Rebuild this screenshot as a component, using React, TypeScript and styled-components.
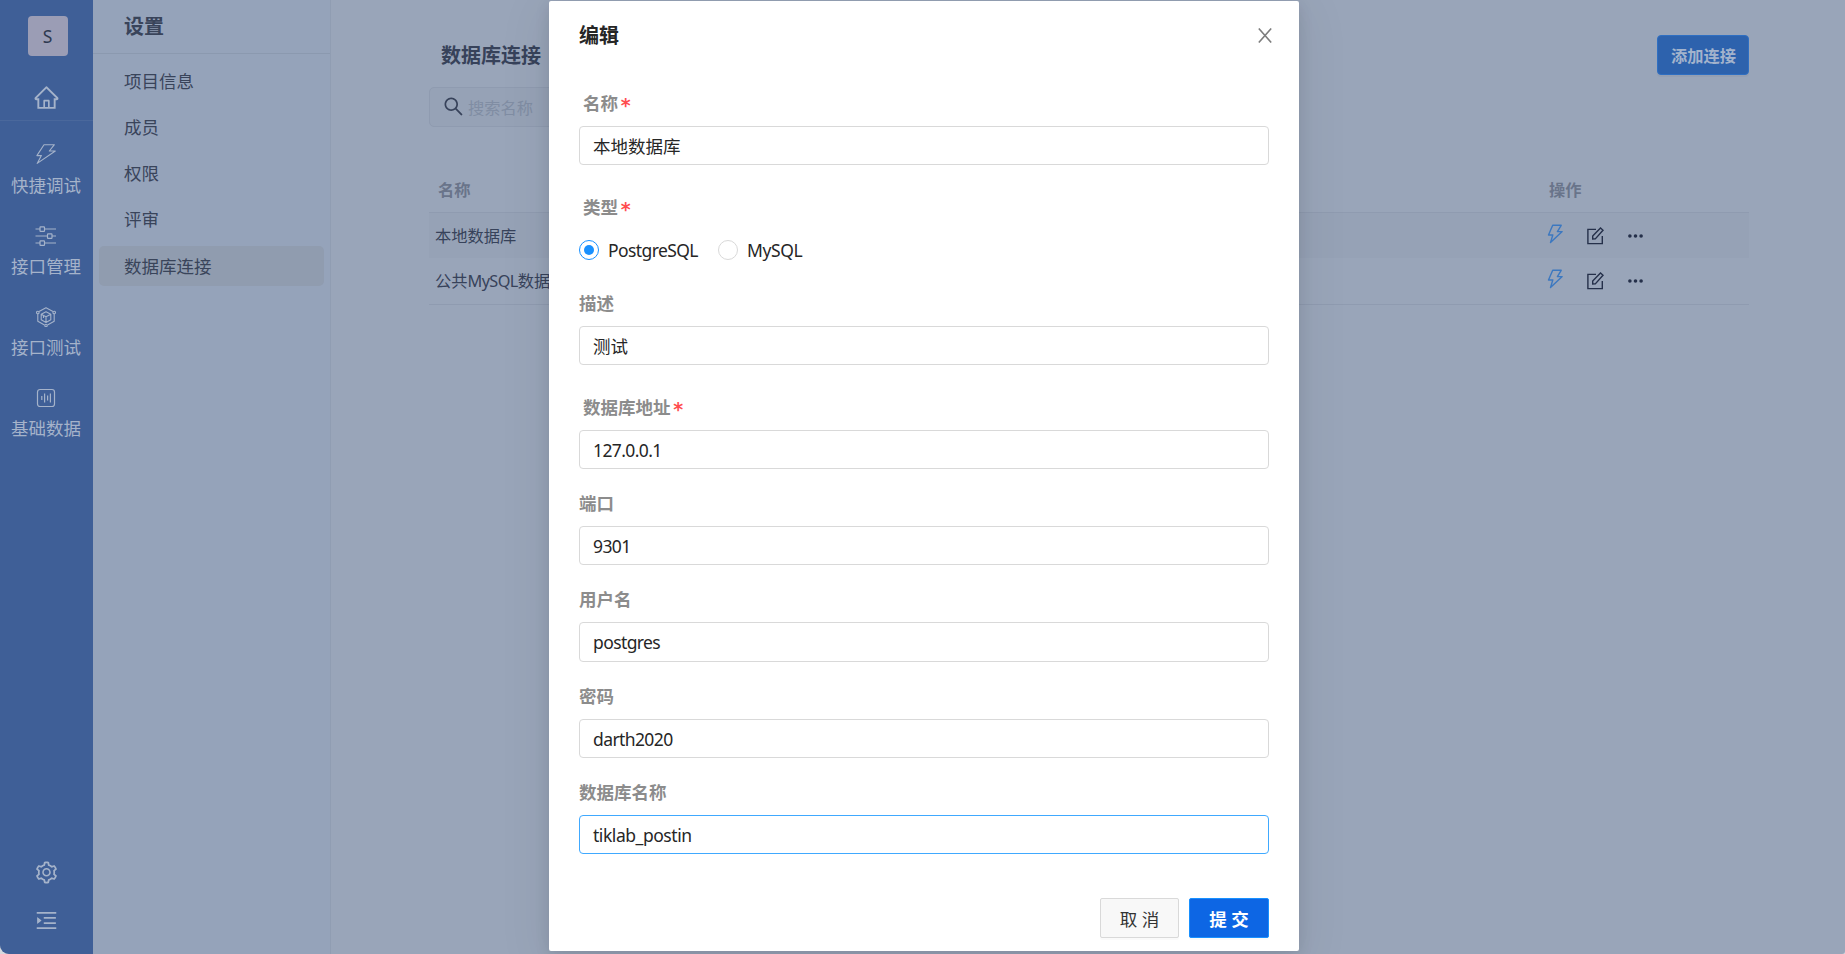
import React from "react";
import styled, { createGlobalStyle, css } from "styled-components";
import { AiOutlineHome, AiOutlineSetting, AiOutlineMenuUnfold, AiOutlineSearch } from "react-icons/ai";

const Global = createGlobalStyle`
  *, *::before, *::after { box-sizing: border-box; }
  html, body { margin: 0; padding: 0; background: #d5d8de; }
  body {
    font-family: "Noto Sans", "Noto Sans CJK SC", sans-serif;
    font-size: 17.5px;
    overflow: hidden;
  }
  svg { display: block; }
`;

const Page = styled.div`
  position: relative;
  display: flex;
  width: 1845px;
  height: 954px;
  background: #99a5b9;
  border-radius: 0 0 3px 9px;
  overflow: hidden;
`;

/* ---------- left rail ---------- */
const Rail = styled.nav`
  width: 93px;
  flex: none;
  display: flex;
  flex-direction: column;
  align-items: center;
  background: #3f5f97;
  color: #a5b3ca;
`;
const Avatar = styled.div`
  width: 40px;
  height: 40px;
  margin: 16px 0 28px 3px;
  border-radius: 4px;
  background: #9b9db5;
  color: #2e3950;
  display: flex;
  align-items: center;
  justify-content: center;
  font-size: 17.5px;
  padding-right: 1px;
`;
const HomeBox = styled.div`
  width: 100%;
  height: 37px;
  display: flex;
  justify-content: center;
  border-bottom: 1px solid #4a689c;
`;
const RailList = styled.div`
  padding-top: 21.5px;
  padding-right: 1px;
  flex: 1;
`;
const RailItem = styled.div`
  height: 81.25px;
  display: flex;
  flex-direction: column;
  align-items: center;
  gap: 6.25px;
  line-height: 28px;
  padding-top: 1.75px;
  white-space: nowrap;
`;
const RailFoot = styled.div`
  display: flex;
  flex-direction: column;
  align-items: center;
  gap: 23px;
  padding-bottom: 21px;
`;

/* ---------- settings menu ---------- */
const Menu = styled.aside`
  width: 238px;
  flex: none;
  background: #95a3ba;
  border-right: 1px solid #909db2;
  color: #39445a;
`;
const MenuTitle = styled.div`
  height: 54px;
  padding-left: 31px;
  line-height: 54px;
  font-size: 20px;
  font-weight: 700;
  border-bottom: 1px solid #8b99af;
`;
const MenuList = styled.div`
  display: flex;
  flex-direction: column;
  gap: 6px;
  padding: 7px 6px 0;
`;
const MenuItem = styled.div<{ $active?: boolean }>`
  height: 40px;
  line-height: 40px;
  padding-left: 25px;
  border-radius: 5px;
  ${(p) => p.$active && css`margin-top: 1px; background: #909caf;`}
`;

/* ---------- content ---------- */
const Content = styled.main`
  width: 1320px;
  margin-left: 98px;
  color: #37425a;
`;
const Head = styled.div`
  display: flex;
  justify-content: space-between;
  align-items: center;
  padding: 35px 0 12px 12px;
`;
const Heading = styled.div`
  height: 40px;
  font-size: 20px;
  font-weight: 700;
  line-height: 42px;
`;
const AddButton = styled.button`
  width: 92px;
  height: 40px;
  padding: 0 0 1px 1px;
  border: 1px solid #2f6fc2;
  border-radius: 4px;
  background: #2d62ad;
  color: #a3b3cc;
  font: 700 16.25px "Noto Sans", "Noto Sans CJK SC", sans-serif;
  box-shadow: 0 2px 0 rgba(0, 0, 0, 0.03);
`;
const Search = styled.div`
  width: 250px;
  height: 40px;
  display: flex;
  align-items: center;
  gap: 3px;
  padding: 0 0 1px 12px;
  border: 1px solid #8f9bb0;
  border-radius: 5px;
  background: #96a2b6;
  font-size: 16.25px;
`;
const Placeholder = styled.span`
  color: #808da3;
`;
const TableHead = styled.div`
  display: flex;
  height: 46px;
  margin-top: 40px;
  padding-left: 9px;
  line-height: 47px;
  font-size: 16.25px;
  font-weight: 700;
  color: #69748a;
  border-bottom: 1px solid #8f9bb0;
`;
const Row = styled.div<{ $shaded?: boolean; $last?: boolean }>`
  display: flex;
  height: ${(p) => (p.$last ? 47 : 45)}px;
  padding-left: 6px;
  line-height: 47px;
  font-size: 16.25px;
  background: ${(p) => (p.$shaded ? "#96a2b6" : "transparent")};
  ${(p) => p.$last && css`border-bottom: 1px solid #8f9bb0;`}
`;
const NameCell = styled.div<{ $w: number }>`
  width: ${(p) => p.$w}px;
`;
const Actions = styled.div`
  display: flex;
  gap: 23px;
  padding-top: 11px;
  color: #25304a;
`;

/* ---------- dialog ---------- */
const Dialog = styled.section`
  position: absolute;
  left: 549px;
  top: 1px;
  width: 750px;
  height: 950px;
  padding: 0 30px;
  background: #fff;
  border-radius: 2px;
  color: #262626;
  box-shadow: 0 4px 15px 0 rgba(0, 0, 0, 0.1), 0 10px 50px 8px rgba(0, 0, 0, 0.06);
`;
const DialogHead = styled.header`
  height: 89px;
  display: flex;
  justify-content: space-between;
  align-items: flex-start;
  padding-top: 19px;
  font-size: 20px;
  line-height: 31px;
  font-weight: 700;
`;
const CloseBox = styled.div`
  padding-top: 8px;
  margin-right: -3px;
`;
const Field = styled.div<{ $after: number }>`
  margin-bottom: ${(p) => p.$after}px;
`;
const Label = styled.div<{ $required?: boolean }>`
  display: flex;
  gap: 2px;
  height: 27px;
  margin-bottom: 9px;
  padding-left: ${(p) => (p.$required ? 4 : 0)}px;
  line-height: 27px;
  font-weight: 700;
  color: #8c8c8c;
`;
const Star = styled.span`
  color: #ff4d4f;
  font: 700 19px/31px "DejaVu Sans Mono", monospace;
`;
const Input = styled.div<{ $focus?: boolean }>`
  height: 39.25px;
  padding-left: 13px;
  line-height: 39px;
  border: 1px solid ${(p) => (p.$focus ? "#40a9ff" : "#d9d9d9")};
  border-radius: 4px;
`;
const Latin = styled.span<{ $track?: number }>`
  font-family: "Noto Sans", sans-serif;
  letter-spacing: ${(p) => p.$track ?? -0.6}px;
`;
const Radios = styled.div`
  display: flex;
  height: 40px;
  align-items: center;
`;
const RadioItem = styled.div<{ $w: number }>`
  display: flex;
  align-items: center;
  gap: 9px;
  width: ${(p) => p.$w}px;
  line-height: 28px;
`;
const Dot = styled.span<{ $on?: boolean }>`
  width: 20px;
  height: 20px;
  flex: none;
  border-radius: 50%;
  border: 1px solid ${(p) => (p.$on ? "#1890ff" : "#d9d9d9")};
  display: flex;
  align-items: center;
  justify-content: center;
  &::after {
    content: "";
    width: 10px;
    height: 10px;
    border-radius: 50%;
    background: ${(p) => (p.$on ? "#1890ff" : "transparent")};
  }
`;
const Footer = styled.footer`
  display: flex;
  justify-content: flex-end;
  gap: 10px;
`;
const Button = styled.button<{ $primary?: boolean }>`
  width: ${(p) => (p.$primary ? 80 : 79)}px;
  height: 40px;
  padding: 0;
  border: 1px solid ${(p) => (p.$primary ? "#1890ff" : "#d9d9d9")};
  border-radius: 2px;
  background: ${(p) => (p.$primary ? "#0d66e4" : "#f8f8f8")};
  color: ${(p) => (p.$primary ? "#fff" : "#333")};
  font: ${(p) => (p.$primary ? 700 : 400)} 17.5px "Noto Sans", "Noto Sans CJK SC", sans-serif;
  box-shadow: 0 2px 0 rgba(0, 0, 0, 0.02);
`;

const RailBolt = () => (
  <svg width="20" height="20" viewBox="0 0 20 20" fill="none" stroke="currentColor" strokeWidth="1.1" strokeLinejoin="round">
    <path d="M8 .7H18.4L13.3 7H19.3L1.2 19.4L5.4 11.6H.9Z" />
  </svg>
);
const Sliders = () => (
  <svg width="22" height="20" viewBox="0 0 22 20" fill="none" stroke="currentColor" strokeWidth="1.2">
    <path d="M.5 3H5M9.5 3H21M.5 10H12.5M17 10H21M.5 17H5M9.5 17H21" />
    <rect x="5" y=".8" width="4.5" height="4.5" rx=".6" />
    <rect x="12.5" y="7.8" width="4.5" height="4.5" rx=".6" />
    <rect x="5" y="14.8" width="4.5" height="4.5" rx=".6" />
  </svg>
);
const Cube = () => (
  <svg width="20" height="20" viewBox="0 0 20 20" fill="none" stroke="currentColor" strokeWidth="1.1" strokeLinejoin="round">
    <path d="M3 4.5L10 .8L17 4.5M18.2 7V14.3L11.5 18M8.5 18L1.8 14.3V7" />
    <circle cx="1.8" cy="5.5" r="1.3" />
    <circle cx="18.2" cy="5.5" r="1.3" />
    <circle cx="10" cy="18.5" r="1.2" />
    <path d="M10 4.8L14.8 7.3V12.7L10 15.4L5.2 12.7V7.3ZM5.2 7.3L10 9.8L14.8 7.3M10 9.8V15.4M7.5 8.5V11" />
  </svg>
);
const Bars = () => (
  <svg width="20" height="20" viewBox="0 0 20 20" fill="none" stroke="currentColor" strokeWidth="1.2">
    <rect x="1.5" y="1.5" width="17" height="17" rx="2.5" />
    <path d="M5.8 8V12M8.6 5.5V14.5M11.6 7.5V12.5M14.4 5.5V14.5" />
  </svg>
);
const RowBolt = () => (
  <svg width="17" height="20" viewBox="0 0 17 20" fill="none" stroke="#3c78c0" strokeWidth="1.4" strokeLinejoin="round">
    <path d="M5.7 1.3H14.2L10.4 7.6H15.2L3.5 18.6L5.8 11H1.5Z" />
  </svg>
);
const Edit = () => (
  <svg width="18" height="21" viewBox="0 0 18 21" fill="none" stroke="currentColor" strokeWidth="1.4">
    <path d="M9 5.4H.9V19.6H15.3V12" />
    <path d="M5.7 15V12.1L13.5 4L16 6.2L8.3 14.9Z" />
  </svg>
);
const More = () => (
  <svg width="17" height="20" viewBox="0 0 17 20" fill="currentColor">
    <circle cx="1.9" cy="12" r="1.8" />
    <circle cx="7.5" cy="12" r="1.8" />
    <circle cx="13.1" cy="12" r="1.8" />
  </svg>
);
const Close = () => (
  <svg width="14" height="15" viewBox="0 0 14 15" stroke="#7d7d7d" strokeWidth="1.6">
    <path d="M.8 .5L13.2 14.5M13.2 .5L.8 14.5" />
  </svg>
);

const railItems = [
  { icon: <RailBolt />, text: "快捷调试" },
  { icon: <Sliders />, text: "接口管理" },
  { icon: <Cube />, text: "接口测试" },
  { icon: <Bars />, text: "基础数据" },
];
const menuItems = ["项目信息", "成员", "权限", "评审", "数据库连接"];

const RowActions = () => (
  <Actions>
    <RowBolt />
    <Edit />
    <More />
  </Actions>
);

type TextFieldProps = {
  label: string;
  value: string;
  after: number;
  required?: boolean;
  focus?: boolean;
  latin?: boolean;
  track?: number;
};
const TextField = ({ label, value, after, required, focus, latin, track }: TextFieldProps) => (
  <Field $after={after}>
    <Label $required={required}>
      {label}
      {required && <Star>*</Star>}
    </Label>
    <Input $focus={focus}>{latin ? <Latin $track={track}>{value}</Latin> : value}</Input>
  </Field>
);

export default function App() {
  return (
    <>
      <Global />
      <Page>
        <Rail>
          <Avatar>S</Avatar>
          <HomeBox>
            <AiOutlineHome size={27} />
          </HomeBox>
          <RailList>
            {railItems.map((r) => (
              <RailItem key={r.text}>
                {r.icon}
                {r.text}
              </RailItem>
            ))}
          </RailList>
          <RailFoot>
            <AiOutlineSetting size={25} />
            <AiOutlineMenuUnfold size={25} />
          </RailFoot>
        </Rail>
        <Menu>
          <MenuTitle>设置</MenuTitle>
          <MenuList>
            {menuItems.map((m, i) => (
              <MenuItem key={m} $active={i === 4}>
                {m}
              </MenuItem>
            ))}
          </MenuList>
        </Menu>
        <Content>
          <Head>
            <Heading>数据库连接</Heading>
            <AddButton>添加连接</AddButton>
          </Head>
          <Search>
            <AiOutlineSearch size={23} />
            <Placeholder>搜索名称</Placeholder>
          </Search>
          <TableHead>
            <NameCell $w={1111}>名称</NameCell>
            <div>操作</div>
          </TableHead>
          <Row $shaded>
            <NameCell $w={1112}>本地数据库</NameCell>
            <RowActions />
          </Row>
          <Row $last>
            <NameCell $w={1112}>
              公共<Latin>MySQL</Latin>数据库
            </NameCell>
            <RowActions />
          </Row>
        </Content>
        <Dialog>
          <DialogHead>
            编辑
            <CloseBox>
              <Close />
            </CloseBox>
          </DialogHead>
          <TextField label="名称" value="本地数据库" required after={28.25} />
          <Field $after={20.5}>
            <Label $required>
              类型<Star>*</Star>
            </Label>
            <Radios>
              <RadioItem $w={139}>
                <Dot $on />
                <Latin>PostgreSQL</Latin>
              </RadioItem>
              <RadioItem $w={120}>
                <Dot />
                <Latin $track={-0.4}>MySQL</Latin>
              </RadioItem>
            </Radios>
          </Field>
          <TextField label="描述" value="测试" after={28.75} />
          <TextField label="数据库地址" value="127.0.0.1" required latin after={20.75} />
          <TextField label="端口" value="9301" latin after={21} />
          <TextField label="用户名" value="postgres" latin after={21} />
          <TextField label="密码" value="darth2020" latin after={21} />
          <TextField label="数据库名称" value="tiklab_postin" latin track={-0.45} focus after={44} />
          <Footer>
            <Button>取 消</Button>
            <Button $primary>提 交</Button>
          </Footer>
        </Dialog>
      </Page>
    </>
  );
}
